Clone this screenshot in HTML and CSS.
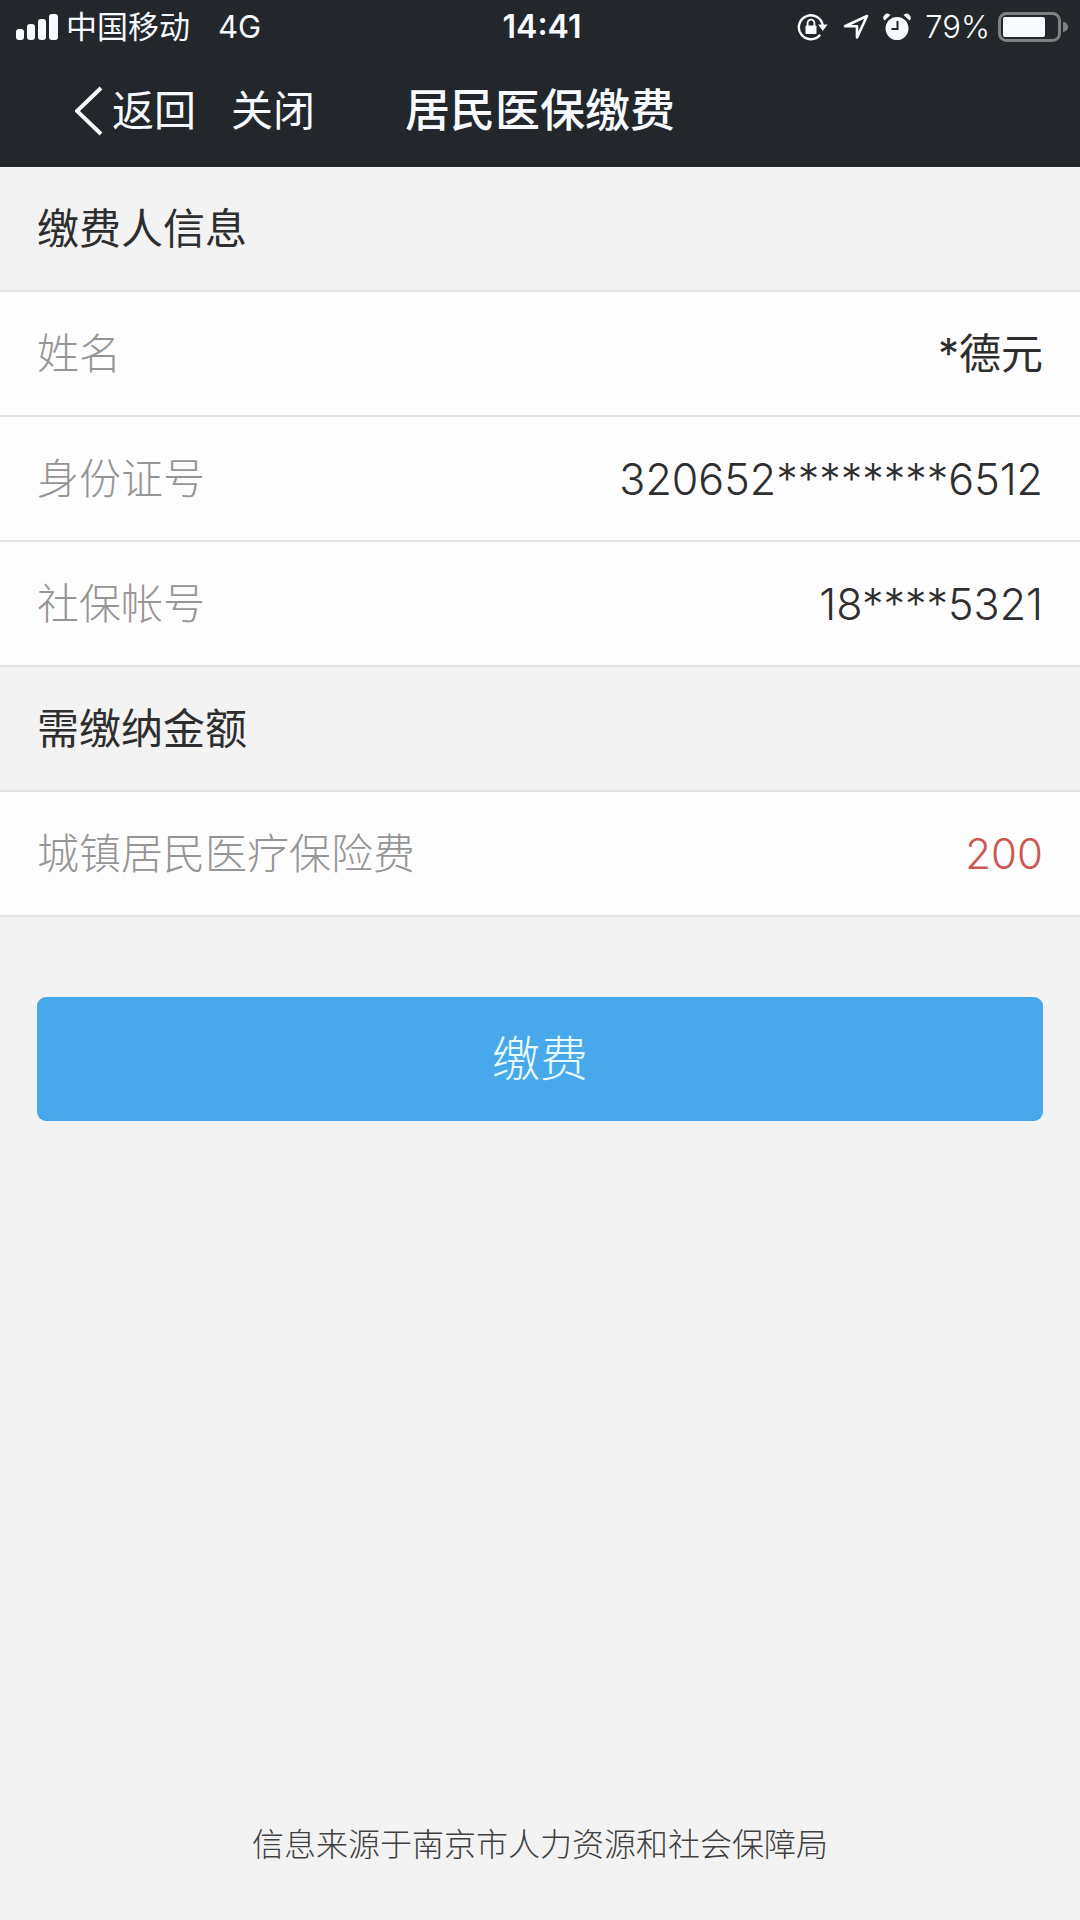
FILE: index.html
```html
<!DOCTYPE html>
<html lang="zh-CN">
<head>
<meta charset="utf-8">
<meta name="viewport" content="width=device-width, initial-scale=1">
<title>居民医保缴费</title>
<link rel="stylesheet" href="styles.css">
</head>
<body>
<div class="app">
  <header class="header">
    <div class="status">
      <div class="status-left">
        <svg class="signal" width="42" height="26" viewBox="0 0 42 26" fill="currentColor" aria-hidden="true">
          <rect x="0" y="15" width="8" height="11" rx="3"/>
          <rect x="11" y="10" width="8" height="16" rx="3"/>
          <rect x="22" y="5" width="8" height="21" rx="3"/>
          <rect x="33" y="0" width="9" height="26" rx="3"/>
        </svg>
        <span class="carrier">中国移动</span>
        <span class="network">4G</span>
      </div>
      <time class="clock">14:41</time>
      <div class="status-right">
        <svg width="32" height="28" viewBox="0 0 32 28" aria-hidden="true">
          <path d="M23.2 21.8A12 12 0 1 1 25.8 13" fill="none" stroke="currentColor" stroke-width="2.4"/>
          <path d="M21 11.5h9.6L25.8 18z" fill="currentColor"/>
          <rect x="8.5" y="12.5" width="11" height="8.5" rx="1" fill="currentColor"/>
          <path d="M10.6 13V10a3.4 3.4 0 0 1 6.8 0v3" fill="none" stroke="currentColor" stroke-width="1.8"/>
        </svg>
        <svg width="26" height="26" viewBox="0 0 26 26" aria-hidden="true">
          <path d="M24 2L2 12.2H14V23.5z" fill="none" stroke="currentColor" stroke-width="2.6" stroke-linejoin="round"/>
        </svg>
        <svg width="28" height="28" viewBox="0 0 28 28" aria-hidden="true">
          <circle cx="14" cy="15.5" r="11.5" fill="currentColor"/>
          <path d="M1.5 7.5A4 4 0 0 1 7.5 2zM26.5 7.5A4 4 0 0 0 20.5 2z" fill="currentColor"/>
          <path d="M14.5 8v8H8.5" fill="none" stroke="#23272b" stroke-width="2"/>
        </svg>
        <span class="percent">79%</span>
        <svg width="70" height="30" viewBox="0 0 70 30" aria-hidden="true">
          <rect x="1.5" y="1.5" width="60" height="27" rx="7" fill="none" stroke="#7d8184" stroke-width="3"/>
          <rect x="5" y="5" width="42" height="20" rx="2" fill="currentColor"/>
          <path d="M65 10a5 5 0 0 1 0 10z" fill="#7d8184"/>
        </svg>
      </div>
    </div>
    <nav class="nav">
      <div class="nav-actions">
        <button class="nav-button" type="button">
          <svg width="28" height="50" viewBox="0 0 28 50" fill="none" stroke="currentColor" stroke-width="4" aria-hidden="true"><path d="M26 2L2 25l24 23"/></svg>
          返回
        </button>
        <button class="nav-button" type="button">关闭</button>
      </div>
      <h1 class="title">居民医保缴费</h1>
    </nav>
  </header>
  <main class="main">
    <h2 class="section-title">缴费人信息</h2>
    <dl class="list">
      <div class="row"><dt>姓名</dt><dd>*德元</dd></div>
      <div class="row"><dt>身份证号</dt><dd class="number">320652********6512</dd></div>
      <div class="row"><dt>社保帐号</dt><dd class="number">18****5321</dd></div>
    </dl>
    <h2 class="section-title">需缴纳金额</h2>
    <dl class="list">
      <div class="row"><dt>城镇居民医疗保险费</dt><dd class="amount">200</dd></div>
    </dl>
    <button class="pay" type="button">缴费</button>
  </main>
  <footer class="footer">信息来源于南京市人力资源和社会保障局</footer>
</div>
</body>
</html>
```
FILE: styles.css
```css
* {
  box-sizing: border-box;
}

body,
h1,
h2,
dl,
dd {
  margin: 0;
}

body {
  background: #f3f3f3;
  color: #2e2e2e;
  font-family: Inter, "Noto Sans CJK SC", sans-serif;
  font-size: 42px;
  line-height: 60px;
}

button {
  padding: 0;
  border: 0;
  font: inherit;
  cursor: pointer;
}

svg {
  flex: none;
}

.app {
  display: flex;
  flex-direction: column;
  min-height: 100vh;
}

.header {
  background: #23272b;
  color: #f7fbff;
}

.status {
  display: grid;
  grid-template-columns: 1fr auto 1fr;
  align-items: center;
  height: 54px;
  padding: 0 12px 0 16px;
  font-size: 31px;
  line-height: 54px;
}

.status-left,
.status-right {
  display: flex;
  align-items: center;
}

.status-right {
  justify-content: flex-end;
  gap: 14px;
}

.carrier {
  margin: 0 28px 0 8px;
}

.clock {
  font-size: 32px;
  font-weight: 600;
}

.percent {
  margin-right: -6px;
  font-weight: 300;
}

.nav {
  display: grid;
  grid-template-columns: 1fr auto 1fr;
  align-items: center;
  height: 113px;
  padding: 0 75px;
}

.nav-actions {
  display: flex;
  gap: 35px;
}

.nav-button {
  display: flex;
  align-items: center;
  gap: 9px;
  background: none;
  color: inherit;
}

.title {
  font-size: 45px;
  font-weight: 500;
}

.main {
  flex: 1;
}

.section-title,
.row {
  display: flex;
  align-items: center;
  min-height: 125px;
  padding: 0 37px;
  border-bottom: 2px solid #e3e3e3;
}

.section-title {
  font-size: 42px;
  font-weight: 400;
}

.row {
  justify-content: space-between;
  background: #fdfdfd;
}

.row dt {
  color: #959595;
  font-weight: 300;
}

.row .number {
  font-size: 43px;
  font-weight: 300;
}

.row .amount {
  color: #cc5650;
  font-weight: 300;
}

.pay {
  display: block;
  width: calc(100% - 74px);
  height: 124px;
  margin: 80px 37px;
  border-radius: 9px;
  background: #47a9ec;
  color: #e9fbff;
  font-size: 48px;
  font-weight: 300;
}

.footer {
  padding: 0 37px 51px;
  color: #404040;
  font-size: 32px;
  font-weight: 300;
  line-height: 48px;
  text-align: center;
}
```
